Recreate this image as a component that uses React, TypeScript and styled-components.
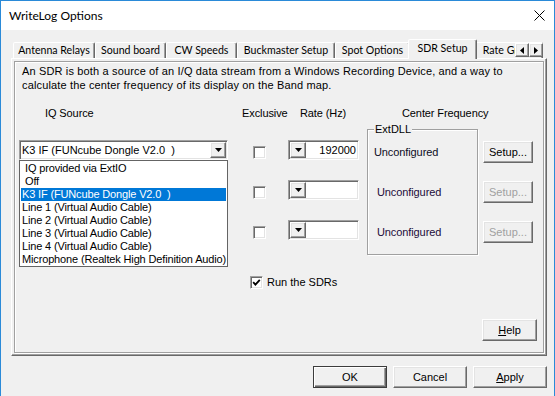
import React from 'react';
import styled, { createGlobalStyle, css } from 'styled-components';

const GlobalStyle = createGlobalStyle`
  html, body {
    margin: 0;
    padding: 0;
    background: #f0f0f0;
  }
  * {
    box-sizing: border-box;
  }
`;

const raised = css`
  background: #f0f0f0;
  border: 1px solid;
  border-color: #fff #696969 #696969 #fff;
  box-shadow: inset -1px -1px 0 #a0a0a0, inset 1px 1px 0 #e3e3e3;
`;

const sunken = css`
  background: #fff;
  border: 1px solid;
  border-color: #a0a0a0 #fff #fff #a0a0a0;
  box-shadow: inset 1px 1px 0 #696969, inset -1px -1px 0 #e3e3e3;
`;

const tabs = [
  { label: 'Antenna Relays', w: 82 },
  { label: 'Sound board', w: 71 },
  { label: 'CW Speeds', w: 71 },
  { label: 'Buckmaster Setup', w: 98 },
  { label: 'Spot Options', w: 75 },
  { label: 'SDR Setup', w: 69, active: true },
  { label: 'Rate Graph', w: 68 },
];

const sources = [
  { label: 'IQ provided via ExtIO', indent: true },
  { label: 'Off', indent: true },
  { label: 'K3 IF (FUNcube Dongle V2.0\u00a0\u00a0)', selected: true },
  { label: 'Line 1 (Virtual Audio Cable)' },
  { label: 'Line 2 (Virtual Audio Cable)' },
  { label: 'Line 3 (Virtual Audio Cable)' },
  { label: 'Line 4 (Virtual Audio Cable)' },
  { label: 'Microphone (Realtek High Definition Audio)' },
];

const sdrRows = [
  { rate: '192000', shift: 15, enabled: true },
  { rate: '', shift: 18, enabled: false },
  { rate: '', shift: 18, enabled: false },
];

const DownArrow = () => (
  <svg width="7" height="4" viewBox="0 0 7 4">
    <polygon points="0,0 7,0 3.5,4" fill="#000" />
  </svg>
);

const App: React.FC = () => {
  return (
    <>
      <GlobalStyle />
      <Window>
        <TitleBar>
          <span>WriteLog Options</span>
          <svg width="11" height="11" viewBox="0 0 11 11">
            <path d="M0.5 0.5L10.5 10.5M10.5 0.5L0.5 10.5" stroke="#000" strokeWidth="1" />
          </svg>
        </TitleBar>
        <Body>
          <TabStrip>
            {tabs.map((t) => (
              <Tab key={t.label} $w={t.w} $active={t.active}>
                {t.label}
              </Tab>
            ))}
            <ScrollArrows>
              <ArrowButton>
                <svg width="4" height="7" viewBox="0 0 4 7">
                  <polygon points="4,0 4,7 0,3.5" fill="#000" />
                </svg>
              </ArrowButton>
              <ArrowButton>
                <svg width="4" height="7" viewBox="0 0 4 7">
                  <polygon points="0,0 0,7 4,3.5" fill="#000" />
                </svg>
              </ArrowButton>
            </ScrollArrows>
          </TabStrip>
          <Panel>
            <PageFrame>
              <Intro>
                An SDR is both a source of an I/Q data stream from a Windows Recording Device, and a way to
                <br />
                calculate the center frequency of its display on the Band map.
              </Intro>
              <SdrGrid>
                <HeadCell $col="1" $indent={26}>IQ Source</HeadCell>
                <HeadCell $col="2" $indent={14}>Exclusive</HeadCell>
                <HeadCell $col="3" $indent={12}>Rate (Hz)</HeadCell>
                <HeadCell $col="4 / 6" $indent={43}>Center Frequency</HeadCell>
                <GroupBox>
                  <GroupLegend>ExtDLL</GroupLegend>
                </GroupBox>
                {sdrRows.map((r, i) => (
                  <React.Fragment key={i}>
                    <ComboCell $row={i + 2} $open={i === 0}>
                      <SourceCombo>
                        <ComboText>{i === 0 ? 'K3 IF (FUNcube Dongle V2.0\u00a0\u00a0)' : ''}</ComboText>
                        <DropButton>
                          <DownArrow />
                        </DropButton>
                      </SourceCombo>
                      {i === 0 && (
                        <DropList>
                          {sources.map((s) => (
                            <ListItem key={s.label} $selected={s.selected} $indent={s.indent}>
                              {s.label}
                            </ListItem>
                          ))}
                        </DropList>
                      )}
                    </ComboCell>
                    <ExclusiveBox $row={i + 2} />
                    <RateCombo $row={i + 2}>
                      <DropButton>
                        <DownArrow />
                      </DropButton>
                      <RateValue>{r.rate}</RateValue>
                    </RateCombo>
                    <FreqLabel $row={i + 2} $shift={r.shift} $dim={i > 0}>
                      Unconfigured
                    </FreqLabel>
                    <SetupButton $row={i + 2} disabled={!r.enabled}>
                      Setup...
                    </SetupButton>
                  </React.Fragment>
                ))}
              </SdrGrid>
              <RunRow>
                <CheckBox>
                  <svg width="9" height="9" viewBox="0 0 9 9">
                    <path d="M1.2 4.2L3.4 6.6L7.8 1.8" stroke="#000" strokeWidth="1.8" fill="none" />
                  </svg>
                </CheckBox>
                <span>Run the SDRs</span>
              </RunRow>
              <HelpButton>
                <u>H</u>elp
              </HelpButton>
            </PageFrame>
          </Panel>
          <Footer>
            <DialogButton $default>OK</DialogButton>
            <DialogButton>Cancel</DialogButton>
            <DialogButton>
              <u>A</u>pply
            </DialogButton>
          </Footer>
        </Body>
      </Window>
    </>
  );
};

const Window = styled.div`
  width: 555px;
  height: 396px;
  display: flex;
  flex-direction: column;
  border: 1px solid #2a8ad8;
  border-bottom: none;
  background: #f0f0f0;
  overflow: hidden;
  font-family: 'Liberation Sans', Arial, sans-serif;
  font-size: 11px;
  color: #000;
`;

const TitleBar = styled.div`
  flex: none;
  height: 29px;
  background: #fff;
  display: flex;
  align-items: center;
  justify-content: space-between;
  padding: 0 9px 0 8px;
  font-family: Lato, 'Liberation Sans', sans-serif;
  font-size: 12px;
`;

const Body = styled.div`
  flex: 1;
  display: flex;
  flex-direction: column;
  padding: 9px 7px 0 10px;
`;

const TabStrip = styled.div`
  flex: none;
  position: relative;
  z-index: 1;
  height: 20px;
  margin-bottom: -1px;
  padding-left: 2px;
  display: flex;
  align-items: flex-end;
  overflow: hidden;
`;

const Tab = styled.div<{ $w: number; $active?: boolean }>`
  flex: none;
  position: relative;
  z-index: ${(p) => (p.$active ? 2 : 1)};
  width: ${(p) => p.$w}px;
  height: ${(p) => (p.$active ? 20 : 16)}px;
  margin: ${(p) => (p.$active ? '0 -2px' : '0 0 1px')};
  padding-top: ${(p) => (p.$active ? 1 : 0)}px;
  background: #f0f0f0;
  border: 1px solid;
  border-bottom: none;
  border-color: #fff #696969 transparent #fff;
  border-radius: 2px 2px 0 0;
  box-shadow: inset -1px 0 0 #a0a0a0;
  display: flex;
  justify-content: center;
  font-family: Lato, 'Liberation Sans', sans-serif;
  font-size: 10.6px;
  line-height: 14px;
  white-space: nowrap;
`;

const ScrollArrows = styled.div`
  position: absolute;
  z-index: 3;
  top: 4px;
  right: 4px;
  display: flex;
`;

const ArrowButton = styled.div`
  ${raised};
  width: 14px;
  height: 14px;
  display: flex;
  align-items: center;
  justify-content: center;
`;

const Panel = styled.div`
  flex: none;
  height: 298px;
  padding: 2px;
  display: flex;
  border: 1px solid;
  border-color: #fff #696969 #696969 #fff;
  box-shadow: inset -1px -1px 0 #a0a0a0;
`;

const PageFrame = styled.div`
  flex: 1;
  display: flex;
  flex-direction: column;
  padding: 0 6px 0 4px;
  border: 1px solid #a0a0a0;
  box-shadow: 1px 1px 0 #fff, inset 1px 1px 0 #fff;
`;

const Intro = styled.p`
  margin: 2px 0 0 3px;
  line-height: 14px;
  letter-spacing: 0.15px;
  white-space: nowrap;
`;

const SdrGrid = styled.div`
  margin-top: 14px;
  display: grid;
  grid-template-columns: 209px 60px 71px 119px 55px;
  grid-template-rows: 34px 40px 40px 40px;
`;

const HeadCell = styled.div<{ $col: string; $indent: number }>`
  grid-row: 1;
  grid-column: ${(p) => p.$col};
  padding-left: ${(p) => p.$indent}px;
  line-height: 14px;
  letter-spacing: -0.1px;
  white-space: nowrap;
`;

const GroupBox = styled.div`
  grid-column: 4;
  grid-row: 2 / 5;
  position: relative;
  margin: -11px 0 5px 8px;
  border: 1px solid #a0a0a0;
  box-shadow: 1px 1px 0 #fff, inset 1px 1px 0 #fff;
`;

const GroupLegend = styled.span`
  position: absolute;
  top: -7px;
  left: 6px;
  padding: 0 1px;
  background: #f0f0f0;
  line-height: 13px;
`;

const ComboCell = styled.div<{ $row: number; $open?: boolean }>`
  grid-column: 1;
  grid-row: ${(p) => p.$row};
  position: relative;
  z-index: ${(p) => (p.$open ? 5 : 0)};
`;

const SourceCombo = styled.div`
  ${sunken};
  height: 20px;
  padding: 1px;
  display: flex;
`;

const ComboText = styled.span`
  flex: 1;
  padding-left: 1px;
  line-height: 16px;
  white-space: nowrap;
`;

const DropButton = styled.div`
  ${raised};
  flex: none;
  width: 16px;
  height: 16px;
  display: flex;
  align-items: center;
  justify-content: center;
`;

const DropList = styled.div`
  position: absolute;
  top: 20px;
  left: 0;
  width: 209px;
  padding-top: 1px;
  background: #fff;
  border: 1px solid #646464;
`;

const ListItem = styled.div<{ $selected?: boolean; $indent?: boolean }>`
  height: 13px;
  margin: 0 1px;
  padding-left: ${(p) => (p.$indent ? 4 : 1)}px;
  line-height: 13px;
  white-space: nowrap;
  letter-spacing: -0.15px;
  background: ${(p) => (p.$selected ? '#0078d7' : 'transparent')};
  color: ${(p) => (p.$selected ? '#fff' : '#000')};
`;

const ExclusiveBox = styled.div<{ $row: number }>`
  ${sunken};
  grid-column: 2;
  grid-row: ${(p) => p.$row};
  justify-self: start;
  align-self: start;
  width: 13px;
  height: 13px;
  margin: 6px 0 0 25px;
`;

const RateCombo = styled.div<{ $row: number }>`
  ${sunken};
  grid-column: 3;
  grid-row: ${(p) => p.$row};
  align-self: start;
  height: 20px;
  padding: 1px;
  display: flex;
`;

const RateValue = styled.span`
  flex: 1;
  padding-right: 1px;
  text-align: right;
  line-height: 16px;
`;

const FreqLabel = styled.div<{ $row: number; $shift: number; $dim?: boolean }>`
  grid-column: 4;
  grid-row: ${(p) => p.$row};
  align-self: start;
  position: relative;
  margin-top: 6px;
  padding-left: ${(p) => p.$shift}px;
  line-height: 13px;
  letter-spacing: -0.1px;
  color: ${(p) => (p.$dim ? '#1c0c3a' : '#0c0c24')};
`;

const buttonBase = css`
  ${raised};
  padding: 0;
  font-family: inherit;
  font-size: 11px;
  color: #000;
  line-height: 13px;
  &:disabled {
    color: #a0a0a0;
  }
`;

const SetupButton = styled.button<{ $row: number }>`
  ${buttonBase};
  grid-column: 5;
  grid-row: ${(p) => p.$row};
  justify-self: end;
  align-self: start;
  width: 50px;
  height: 22px;
  margin-top: 1px;
`;

const RunRow = styled.div`
  margin: 16px 0 0 231px;
  display: flex;
  align-items: center;
  gap: 4px;
  line-height: 13px;
`;

const CheckBox = styled.div`
  ${sunken};
  flex: none;
  width: 13px;
  height: 13px;
  display: flex;
  align-items: center;
  justify-content: center;
`;

const HelpButton = styled.button`
  ${buttonBase};
  align-self: flex-end;
  width: 55px;
  height: 22px;
  margin-top: 30px;
`;

const Footer = styled.div`
  margin-top: 10px;
  display: flex;
  justify-content: flex-end;
  gap: 6px;
`;

const DialogButton = styled.button<{ $default?: boolean }>`
  ${buttonBase};
  width: 74px;
  height: 22px;
  ${(p) =>
    p.$default &&
    css`
      border-color: #3c3c3c;
      box-shadow: inset 1px 1px 0 #fff, inset -1px -1px 0 #696969, inset -2px -2px 0 #a0a0a0;
    `}
`;

export default App;
